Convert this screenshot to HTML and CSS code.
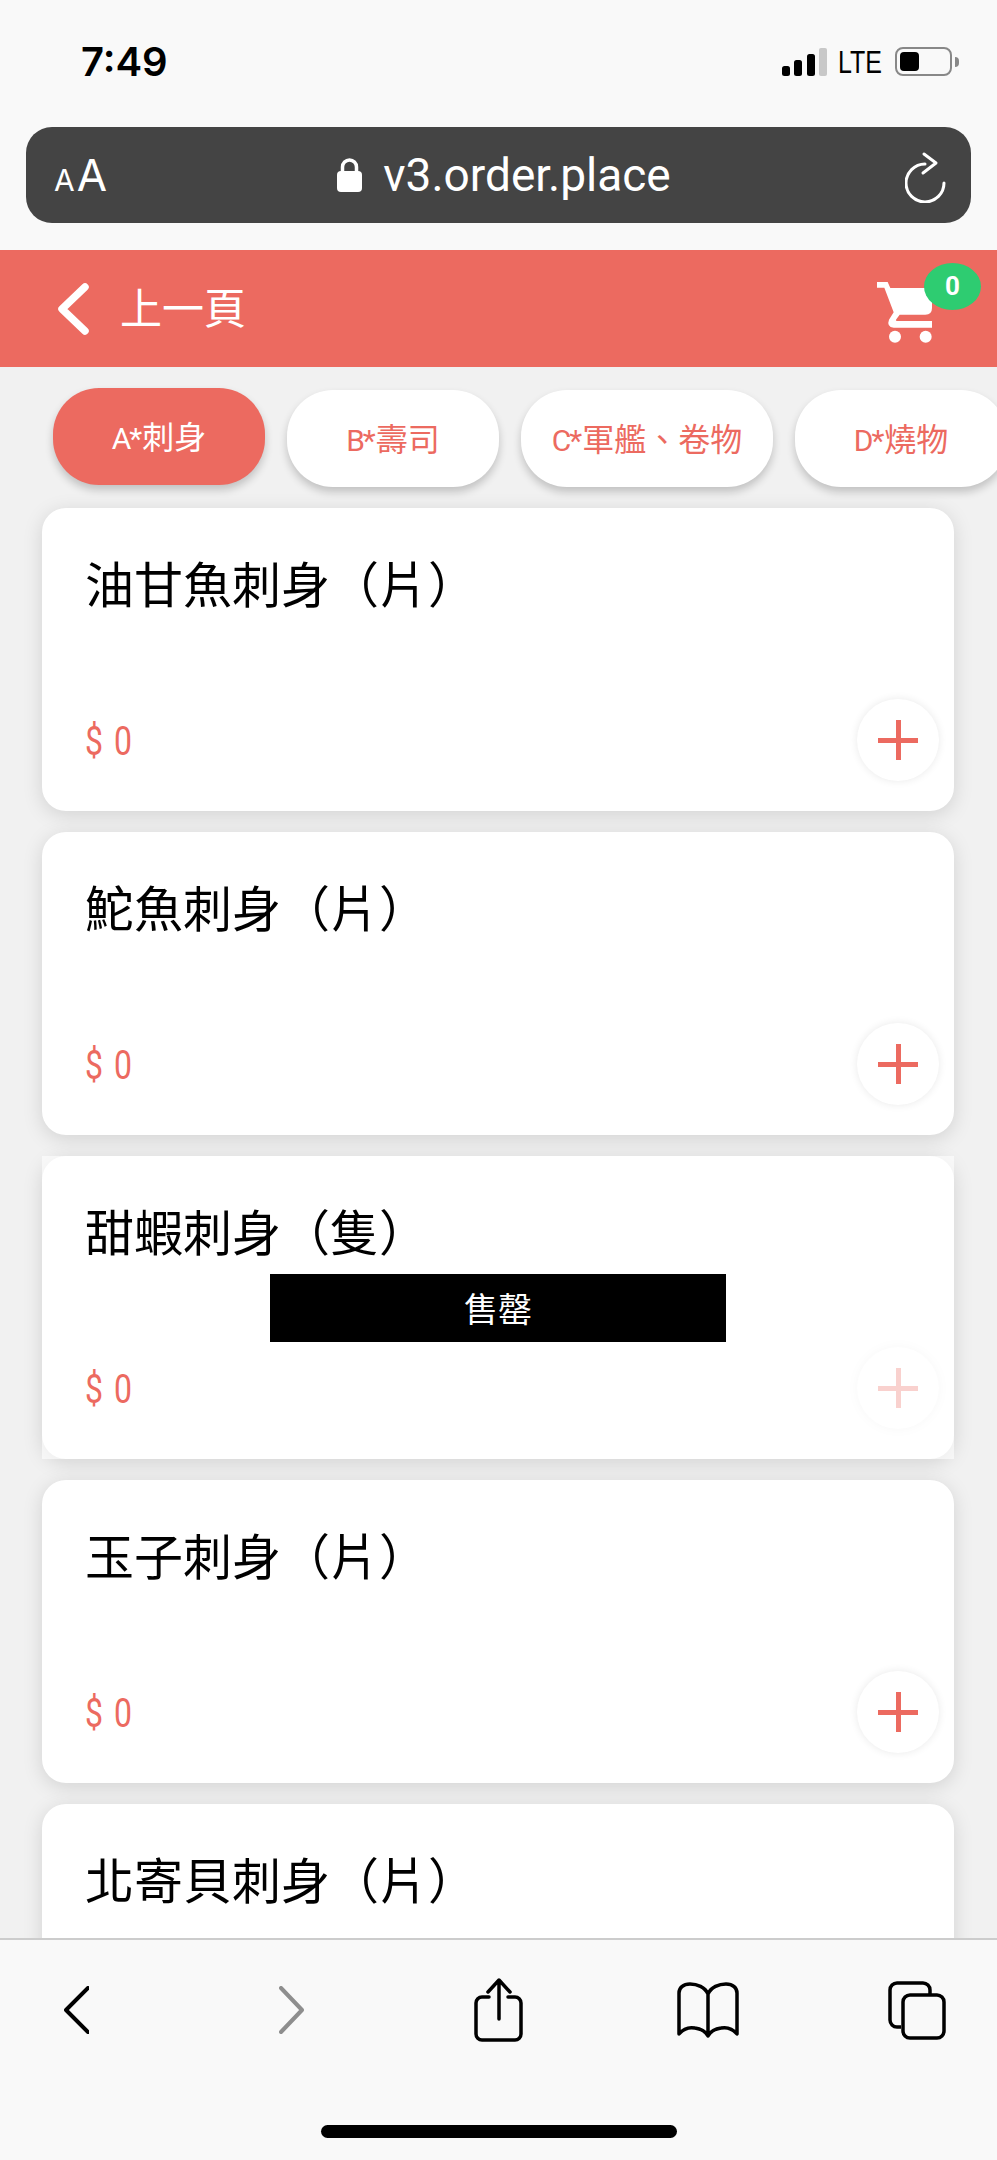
FILE: index.html
```html
<!DOCTYPE html>
<html lang="zh-Hant">
<head>
    <meta charset="UTF-8">
    <meta name="viewport" content="width=device-width, initial-scale=1.0">
    <title>v3.order.place</title>
    <link rel="stylesheet" href="styles.css">
</head>
<body>
    <div class="status_bar">
        <span class="time">7:49</span>
        <div class="status_right">
            <svg class="signal" width="45" height="28" viewBox="0 0 45 28">
                <rect x="0" y="18" width="8" height="10" rx="2.5" fill="#000"/>
                <rect x="12" y="12" width="8" height="16" rx="2.5" fill="#000"/>
                <rect x="25" y="6" width="8" height="22" rx="2.5" fill="#000"/>
                <rect x="37" y="0" width="8" height="28" rx="2" fill="#c8c8c8"/>
            </svg>
            <span class="lte">LTE</span>
            <div class="battery"><div class="battery_fill"></div></div>
            <div class="battery_nub"></div>
        </div>
    </div>

    <div class="url_wrap">
        <div class="url_bar">
            <span class="aa"><span class="aa_small">A</span>A</span>
            <div class="url">
                <svg width="25" height="34" viewBox="0 0 25 34">
                    <rect x="0" y="13" width="25" height="21" rx="4" fill="#fff"/>
                    <path d="M5.5 15V9a7 7 0 0 1 14 0v6" fill="none" stroke="#fff" stroke-width="3.5"/>
                </svg>
                <span>v3.order.place</span>
            </div>
            <svg class="reload" width="42" height="52" viewBox="0 0 42 52" fill="none" stroke="#fff" stroke-width="3" stroke-linecap="round" stroke-linejoin="round">
                <path d="M20 13A19 19 0 1 0 39 32"/>
                <path d="M19 3l12 9-13 10"/>
            </svg>
        </div>
    </div>

    <div class="top_nav">
        <div class="nav_back">
            <svg width="31" height="52" viewBox="0 0 31 52" fill="none" stroke="#fff" stroke-width="7.5" stroke-linecap="round" stroke-linejoin="round">
                <path d="M27 4L4 26l23 22"/>
            </svg>
            <span class="nav_text">上一頁</span>
        </div>
        <div class="cart">
            <svg width="55" height="62" viewBox="0 0 165 186" fill="#fff">
                <path d="M0 3h32l8 18h125v60q0 20-20 20H68l-10 14q-4 6 4 5h103v20H50q-22-3-14-24l14-22L22 20H0z"/>
                <circle cx="54" cy="167" r="18"/>
                <circle cx="146" cy="167" r="18"/>
            </svg>
            <span class="cart_badge">0</span>
        </div>
    </div>

    <main class="content">
        <div class="cat_row">
            <div class="cat_pill cat_active"><span class="latin">A*</span>刺身</div>
            <div class="cat_pill"><span class="latin">B*</span>壽司</div>
            <div class="cat_pill cat_wide"><span class="latin">C*</span>軍艦、卷物</div>
            <div class="cat_pill"><span class="latin">D*</span>燒物</div>
        </div>

        <div class="item_list">
            <div class="item_card">
                <div class="item_name">油甘魚刺身（片）</div>
                <div class="item_bottom">
                    <span class="item_price">$ 0</span>
                    <div class="add_btn"><div class="add_plus"></div></div>
                </div>
            </div>
            <div class="item_card">
                <div class="item_name">鮀魚刺身（片）</div>
                <div class="item_bottom">
                    <span class="item_price">$ 0</span>
                    <div class="add_btn"><div class="add_plus"></div></div>
                </div>
            </div>
            <div class="item_card sold_out">
                <div class="item_name">甜蝦刺身（隻）</div>
                <div class="item_bottom">
                    <span class="item_price">$ 0</span>
                    <div class="add_btn"><div class="add_plus"></div></div>
                </div>
                <div class="sold_label">售罄</div>
            </div>
            <div class="item_card">
                <div class="item_name">玉子刺身（片）</div>
                <div class="item_bottom">
                    <span class="item_price">$ 0</span>
                    <div class="add_btn"><div class="add_plus"></div></div>
                </div>
            </div>
            <div class="item_card">
                <div class="item_name">北寄貝刺身（片）</div>
            </div>
        </div>
    </main>

    <div class="bottom_bar">
        <div class="tool_row">
            <svg width="25" height="48" viewBox="0 0 25 48" fill="none" stroke="#000" stroke-width="4" stroke-linecap="round" stroke-linejoin="round">
                <path d="M24 2L2 24l22 22"/>
            </svg>
            <svg width="25" height="48" viewBox="0 0 25 48" fill="none" stroke="#8e8e8e" stroke-width="4" stroke-linecap="round" stroke-linejoin="round">
                <path d="M2 2l21 22L2 46"/>
            </svg>
            <svg width="50" height="64" viewBox="0 0 50 64" fill="none" stroke="#000" stroke-width="3.5" stroke-linecap="round" stroke-linejoin="round">
                <path d="M15 19H8a6 6 0 0 0-6 6v31a6 6 0 0 0 6 6h33a6 6 0 0 0 6-6V25a6 6 0 0 0-6-6h-7"/>
                <path d="M25 41V3M14 14L25 2l11 12"/>
            </svg>
            <svg width="62" height="56" viewBox="0 0 62 56" fill="none" stroke="#000" stroke-width="3.5" stroke-linejoin="round">
                <path d="M31 12C28 5 20 2 13 2 6 2 2 6 2 11v41c5-6 11-7 16-6 6 1 11 4 13 8 2-4 7-7 13-8 5-1 11 0 16 6V11c0-5-4-9-11-9-7 0-15 3-18 10v42"/>
            </svg>
            <svg width="58" height="59" viewBox="0 0 58 59" fill="none" stroke="#000" stroke-width="3.5" stroke-linejoin="round">
                <path d="M13 46H9a7 7 0 0 1-7-7V9a7 7 0 0 1 7-7h26a7 7 0 0 1 7 7v4"/>
                <rect x="15" y="14" width="41" height="43" rx="7"/>
            </svg>
        </div>
        <div class="home_bar"></div>
    </div>
</body>
</html>
```

FILE: styles.css
```css
body{
  margin: 0;
  width: 997px;
  height: 2160px;
  overflow: hidden;
  display: flex;
  flex-direction: column;
  background-color: #f1f1f1;
  font-family: "Noto Sans CJK TC", Roboto, sans-serif;
}

/* status bar + address bar */
.status_bar{
  height: 127px;
  flex-shrink: 0;
  box-sizing: border-box;
  padding: 39px 38px 0 81px;
  display: flex;
  justify-content: space-between;
  align-items: flex-start;
  background-color: #f9f9f9;
}
.time{
  font-family: Inter, sans-serif;
  font-size: 40px;
  font-weight: 600;
  line-height: 46px;
  color: #000;
}
.status_right{
  display: flex;
  align-items: center;
  margin-top: 8px;
}
.lte{
  display: inline-block;
  width: 45px;
  margin-left: 11px;
  font-family: "Liberation Sans", sans-serif;
  font-size: 32px;
  line-height: 28px;
  color: #000;
  white-space: nowrap;
  transform: scaleX(.78);
  transform-origin: left center;
}
.battery{
  margin-left: 12px;
  width: 57px;
  height: 29px;
  box-sizing: border-box;
  border: 2px solid #888;
  border-radius: 8px;
  padding: 3px;
}
.battery_fill{
  width: 19px;
  height: 100%;
  background-color: #000;
  border-radius: 4px;
}
.battery_nub{
  margin-left: 3px;
  width: 4px;
  height: 10px;
  background-color: #888;
  border-radius: 0 4px 4px 0;
}
.url_wrap{
  height: 123px;
  flex-shrink: 0;
  background-color: #f9f9f9;
}
.url_bar{
  width: 945px;
  height: 96px;
  margin-left: 26px;
  box-sizing: border-box;
  padding: 0 24px 0 28px;
  display: flex;
  justify-content: space-between;
  align-items: center;
  background-color: #444;
  border-radius: 26px;
  color: #fff;
}
.aa{
  font-family: Inter, sans-serif;
  font-size: 44px;
  line-height: 1;
}
.aa_small{
  font-size: 30px;
  margin-right: 2px;
}
.url{
  display: flex;
  align-items: center;
  gap: 21px;
  margin-right: 4px;
  font-family: Roboto, sans-serif;
  font-size: 46px;
}
.reload{
  margin-top: 3px;
}

/* red header */
.top_nav{
  height: 117px;
  flex-shrink: 0;
  box-sizing: border-box;
  padding: 0 16px 0 58px;
  display: flex;
  justify-content: space-between;
  align-items: center;
  background-color: #ec6a60;
}
.nav_back{
  display: flex;
  align-items: center;
  gap: 31px;
  font-size: 42px;
  color: #fff;
}
.nav_text{
  margin-bottom: 6px;
}
.cart{
  position: relative;
  width: 104px;
  height: 62px;
  margin-top: 6px;
}
.cart_badge{
  position: absolute;
  left: 47px;
  top: -18px;
  width: 57px;
  height: 47px;
  border-radius: 50%;
  background-color: #2ecc71;
  color: #fff;
  font-family: Roboto, sans-serif;
  font-size: 26px;
  font-weight: 700;
  line-height: 47px;
  text-align: center;
}

/* categories */
.content{
  flex: 1;
  min-height: 0;
  overflow: hidden;
}
.cat_row{
  display: flex;
  gap: 22px;
  align-items: flex-start;
  padding: 21px 0 21px 53px;
}
.cat_pill{
  flex-shrink: 0;
  width: 212px;
  height: 97px;
  margin-top: 2px;
  border-radius: 46px;
  background-color: #fff;
  box-shadow: 0 5px 9px rgba(0,0,0,.2);
  color: #ec6a60;
  font-size: 32px;
  line-height: 95px;
  text-align: center;
}
.cat_wide{
  width: 252px;
}
.cat_active{
  margin-top: 0;
  background-color: #ec6a60;
  color: #fff;
}
.latin{
  font-family: Roboto, sans-serif;
  font-size: 30px;
  letter-spacing: -2px;
  margin-right: 2px;
}

/* items */
.item_list{
  display: flex;
  flex-direction: column;
  gap: 21px;
  padding: 0 43px 0 42px;
}
.item_card{
  position: relative;
  isolation: isolate;
  flex-shrink: 0;
  height: 303px;
  box-sizing: border-box;
  padding: 44px 15px 30px 43px;
  display: flex;
  flex-direction: column;
  justify-content: space-between;
  background-color: #fff;
  border-radius: 24px;
  box-shadow: 0 4px 20px rgba(0,0,0,.13);
}
.item_name{
  font-size: 49px;
  line-height: 60px;
  color: #000;
}
.item_bottom{
  display: flex;
  justify-content: space-between;
  align-items: center;
}
.item_price{
  display: inline-block;
  margin-top: 3px;
  font-family: Roboto, sans-serif;
  font-size: 40px;
  letter-spacing: 2px;
  color: #ec6a60;
  transform: scaleX(.8);
  transform-origin: left center;
}
.add_btn{
  width: 82px;
  height: 82px;
  display: flex;
  align-items: center;
  justify-content: center;
  border-radius: 50%;
  background-color: #fff;
  box-shadow: 0 0 8px rgba(0,0,0,.09);
}
.add_plus{
  position: relative;
  width: 40px;
  height: 5px;
  background-color: #ec6a60;
}
.add_plus::after{
  content: "";
  position: absolute;
  left: 17.5px;
  top: -17.5px;
  width: 5px;
  height: 40px;
  background-color: #ec6a60;
}
.sold_out::before{
  content: "";
  position: absolute;
  inset: 0;
  z-index: -1;
  background-color: rgba(255,255,255,.6);
}
.sold_out .add_btn{
  opacity: .3;
}
.sold_label{
  position: absolute;
  left: 228px;
  top: 118px;
  width: 456px;
  height: 68px;
  background-color: #000;
  color: #fff;
  font-size: 34px;
  line-height: 68px;
  text-align: center;
}

/* safari toolbar */
.bottom_bar{
  height: 222px;
  flex-shrink: 0;
  box-sizing: border-box;
  border-top: 2px solid #ccc;
  background-color: #f9f9f9;
}
.tool_row{
  height: 140px;
  margin-bottom: 45px;
  box-sizing: border-box;
  padding-left: 64px;
  display: grid;
  grid-template-columns: 215px 195px 203px 211px auto;
  justify-items: start;
  align-items: center;
}
.home_bar{
  width: 356px;
  height: 13px;
  margin-left: 321px;
  border-radius: 7px;
  background-color: #000;
}
```
